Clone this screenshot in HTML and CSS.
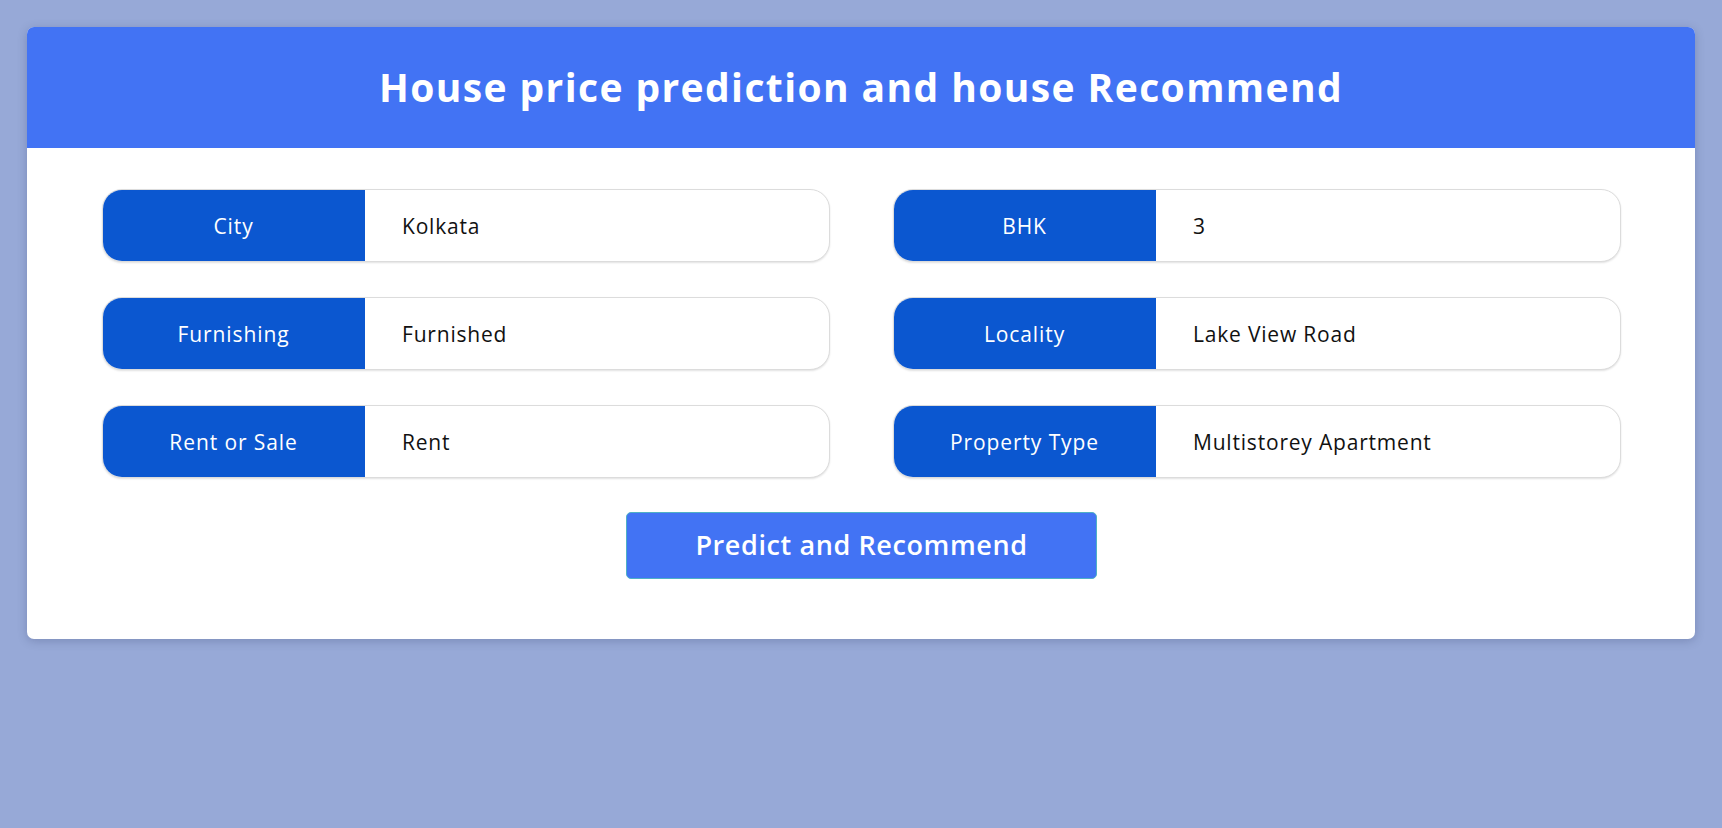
FILE: index.html
```html
<!DOCTYPE html>
<html lang="en">
<head>
<meta charset="utf-8">
<title>House price prediction and house Recommend</title>
<link rel="stylesheet" href="styles.css">
</head>
<body>
<main class="card">
  <header class="card-header">
    <h1 class="title">House price prediction and house Recommend</h1>
  </header>
  <form class="form">
    <div class="fields">
      <div class="field"><span class="field-label">City</span><span class="field-value">Kolkata</span></div>
      <div class="field"><span class="field-label">BHK</span><span class="field-value">3</span></div>
      <div class="field"><span class="field-label">Furnishing</span><span class="field-value">Furnished</span></div>
      <div class="field"><span class="field-label">Locality</span><span class="field-value">Lake View Road</span></div>
      <div class="field"><span class="field-label">Rent or Sale</span><span class="field-value">Rent</span></div>
      <div class="field"><span class="field-label">Property Type</span><span class="field-value">Multistorey Apartment</span></div>
    </div>
    <div class="actions">
      <button type="button" class="submit">Predict and Recommend</button>
    </div>
  </form>
</main>
</body>
</html>
```

FILE: styles.css
```css
* { box-sizing: border-box; }

html, body {
  margin: 0;
  height: 100%;
}

body {
  background: #97a9d7;
  padding: 27px 27px 0 27px;
  font-family: "Open Sans", "Noto Sans", sans-serif;
}

.card {
  background: #ffffff;
  border-radius: 7px;
  overflow: hidden;
  box-shadow: 0 2px 10px rgba(40, 50, 90, 0.25);
}

.card-header {
  background: #4273f4;
  height: 121px;
  display: flex;
  align-items: center;
  justify-content: center;
}

.title {
  margin: 0;
  color: #ffffff;
  font-size: 39px;
  font-weight: 700;
  letter-spacing: 1.4px;
  padding-bottom: 3px;
}

.form {
  padding: 41px 74px 60px 75px;
}

.fields {
  display: grid;
  grid-template-columns: 1fr 1fr;
  column-gap: 63px;
  row-gap: 35px;
}

.field {
  display: flex;
  height: 73px;
  border-radius: 20px;
  overflow: hidden;
  border: 1px solid #dcdcdc;
  box-shadow: 0 1px 2px rgba(0, 0, 0, 0.12);
  background: #ffffff;
}

.field-label {
  flex: 0 0 263px;
  margin: -1px 0 -1px -1px;
  background: #0b57d0;
  color: #ffffff;
  display: flex;
  align-items: center;
  justify-content: center;
  font-size: 21px;
  letter-spacing: 0.9px;
}

.field-value {
  flex: 1;
  display: flex;
  align-items: center;
  padding-left: 37px;
  color: #111111;
  font-size: 21px;
  letter-spacing: 0.8px;
}

.actions {
  display: flex;
  justify-content: center;
  margin-top: 34px;
}

.submit {
  width: 471px;
  height: 67px;
  border: 1px solid #4fb0c6;
  border-radius: 5px;
  background: #4273f4;
  color: #ffffff;
  font-family: "Open Sans", "Noto Sans", sans-serif;
  font-size: 27px;
  font-weight: 600;
  letter-spacing: 0.6px;
  padding: 0 0 3px 0;
}
```
